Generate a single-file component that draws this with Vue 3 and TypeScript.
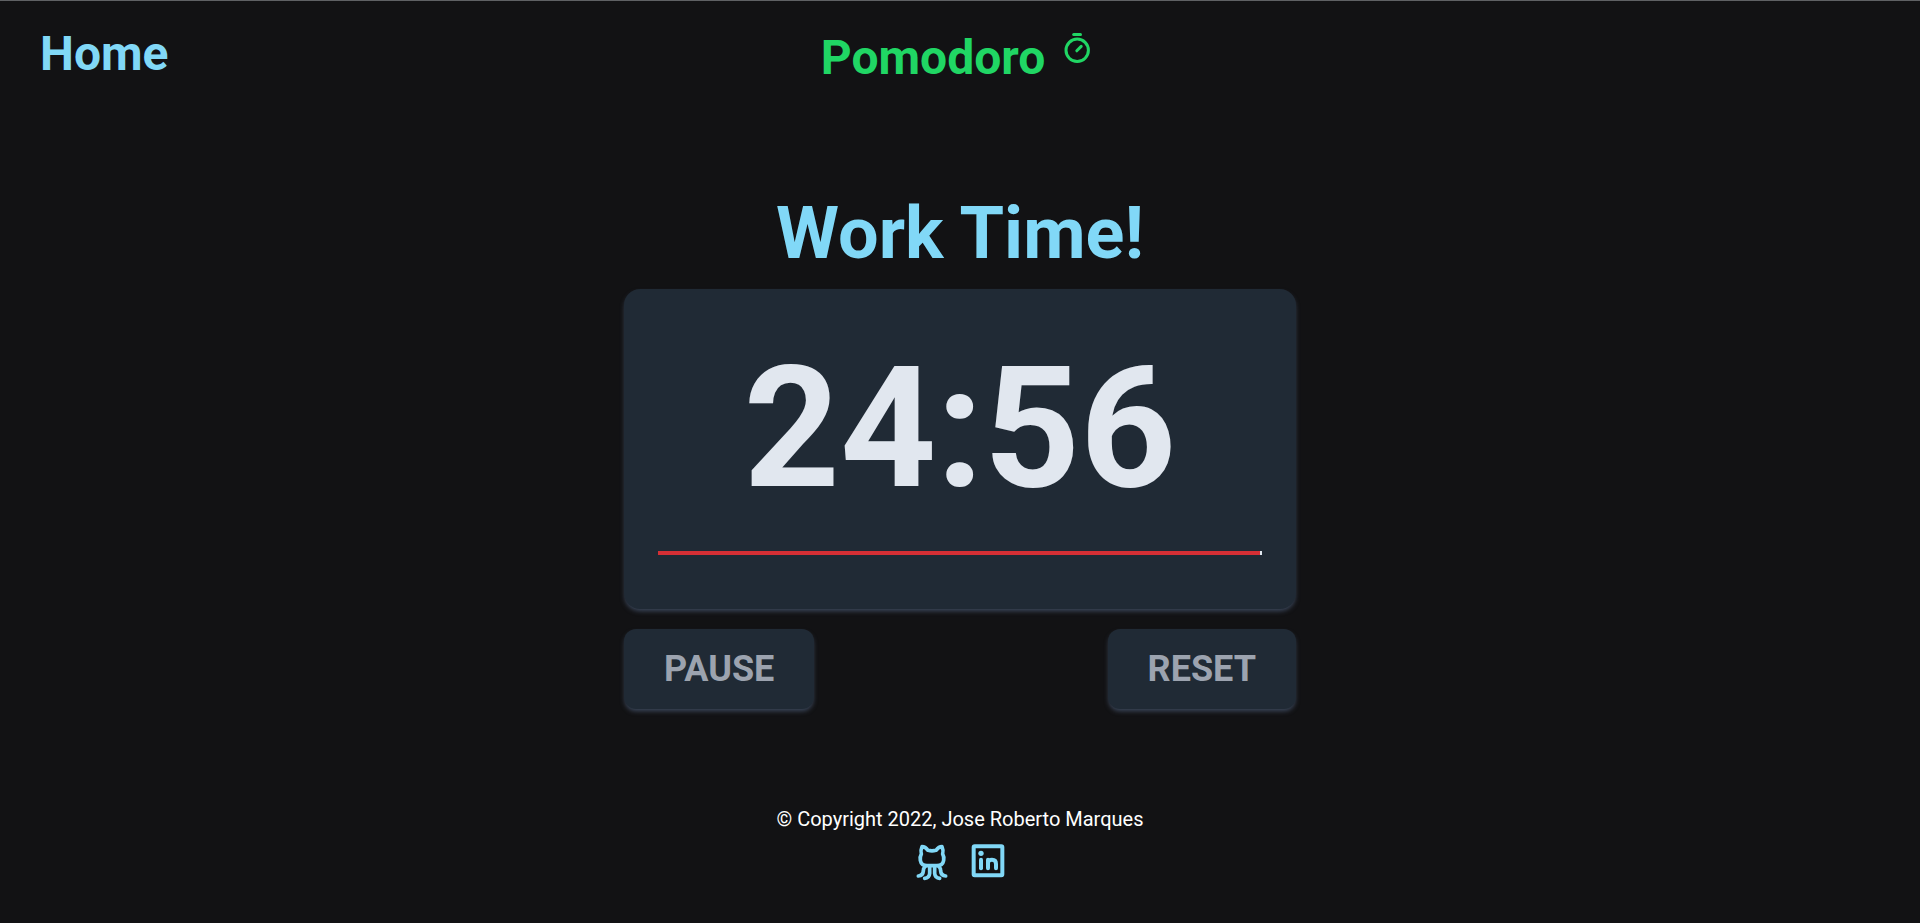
<script setup lang="ts">
import { computed, onBeforeUnmount, ref } from 'vue'

const WORK_SECONDS = 25 * 60

const remaining = ref<number>(24 * 60 + 56)
const running = ref<boolean>(false)
const progress = computed<number>(() => (remaining.value / WORK_SECONDS) * 100)
const clock = computed<string>(() => {
  const minutes = String(Math.floor(remaining.value / 60)).padStart(2, '0')
  const seconds = String(remaining.value % 60).padStart(2, '0')
  return `${minutes}:${seconds}`
})

let timer: number | undefined

function toggle(): void {
  running.value = !running.value
  window.clearInterval(timer)
  if (running.value) {
    timer = window.setInterval(() => {
      if (remaining.value > 0) remaining.value -= 1
    }, 1000)
  }
}

function reset(): void {
  window.clearInterval(timer)
  running.value = false
  remaining.value = WORK_SECONDS
}

onBeforeUnmount(() => window.clearInterval(timer))
</script>

<template>
  <div class="page">
    <header class="header">
      <a class="home" href="#">Home</a>
      <h1 class="brand">
        Pomodoro
        <svg class="stopwatch" viewBox="0 0 46 46" aria-hidden="true">
          <path d="M20.7 4.6h6.8" />
          <circle cx="24.2" cy="20.3" r="11.2" />
          <path d="M23.8 20.8l4.4-4.4" />
        </svg>
      </h1>
    </header>

    <main class="main">
      <h2 class="title">Work Time!</h2>
      <section class="card">
        <div class="clock" role="timer">{{ clock }}</div>
        <div class="track">
          <div class="bar" :style="{ width: progress + '%' }"></div>
        </div>
      </section>
      <div class="actions">
        <button class="action" type="button" @click="toggle">PAUSE</button>
        <button class="action" type="button" @click="reset">RESET</button>
      </div>
    </main>

    <footer class="footer">
      <p class="copyright">© Copyright 2022, Jose Roberto Marques</p>
      <nav class="social">
        <a href="#" aria-label="GitHub">
          <svg viewBox="42 40 108 108" aria-hidden="true">
            <g stroke-width="11">
              <path d="M66 51Q76 51 84 62Q96 65 108 62Q116 51 126 51Q131 62 128 73Q133 82 131 92Q128 108 111 108H81Q64 108 61 92Q59 82 64 73Q61 62 66 51Z" />
              <path d="M76 110Q70 115 70 124Q69 138 55 139" />
              <path d="M89 110V131Q88 145 74 146" />
              <path d="M116 110Q122 115 122 124Q123 138 137 139" />
              <path d="M104 110V131Q105 145 119 146" />
            </g>
          </svg>
        </a>
        <a href="#" aria-label="LinkedIn">
          <svg viewBox="210 40 108 108" aria-hidden="true">
            <g stroke-width="12">
              <rect x="221" y="50" width="86" height="87" rx="3" />
              <path d="M243 90V116" />
              <path d="M264 90V116M264 99Q266 90 276 90Q288 90 288 103V116" />
            </g>
            <circle class="dot" cx="243" cy="71" r="8" />
          </svg>
        </a>
      </nav>
    </footer>
  </div>
</template>

<style>
body {
  margin: 0;
  background: #121214;
}
</style>

<style scoped>
.page {
  box-sizing: border-box;
  min-height: 100vh;
  border-top: 1px solid #5f6164;
  background: #121214;
  color: #e1e7ef;
  font-family: Roboto, "Liberation Sans", sans-serif;
}

.header {
  display: grid;
  grid-template-columns: 1fr auto 1fr;
  align-items: start;
  padding: 25px 40px 24px;
}

.home {
  justify-self: start;
  color: #81d8f7;
  font-size: 48px;
  font-weight: 700;
  line-height: 56px;
  text-decoration: none;
}

.brand {
  display: flex;
  align-items: flex-start;
  gap: 8px;
  margin: 4px 0 0;
  color: #20d664;
  font-size: 48px;
  font-weight: 700;
  line-height: 56px;
}

svg {
  display: block;
  overflow: visible;
  fill: none;
  stroke: currentColor;
  stroke-linecap: round;
  stroke-linejoin: round;
}

.stopwatch {
  width: 46px;
  height: 46px;
  stroke-width: 3;
}

.main {
  width: 672px;
  max-width: 100%;
  margin: 82px auto 0;
}

.title {
  margin: 0 0 13px;
  color: #81d8f7;
  font-size: 72px;
  font-weight: 700;
  line-height: 84px;
  text-align: center;
}

.card,
.action {
  background: #202a35;
  box-shadow: 0 3px 5px -1px #3e4a5f;
}

.card {
  padding: 41px 34px 54px;
  border-radius: 16px;
}

.clock {
  padding-bottom: 23px;
  font-size: 168px;
  font-weight: 700;
  line-height: 198px;
  text-align: center;
}

.track {
  height: 4px;
  background: #e1e7ef;
}

.bar {
  height: 4px;
  background: #d52f35;
}

.actions {
  display: flex;
  justify-content: space-between;
  margin-top: 20px;
}

.action {
  height: 80px;
  padding: 0 40px;
  border: 0;
  border-radius: 12px;
  color: #9ca3af;
  font: 700 36px/42px Roboto, "Liberation Sans", sans-serif;
  cursor: pointer;
}

.footer {
  margin-top: 96px;
}

.copyright {
  margin: 0;
  color: #ffffff;
  font-size: 20px;
  line-height: 28px;
  text-align: center;
}

.social {
  display: flex;
  justify-content: center;
  gap: 20px;
  margin-top: 10px;
}

.social a {
  color: #81d8f7;
}

.social svg {
  width: 36px;
  height: 36px;
}

.dot {
  fill: currentColor;
  stroke: none;
}
</style>
